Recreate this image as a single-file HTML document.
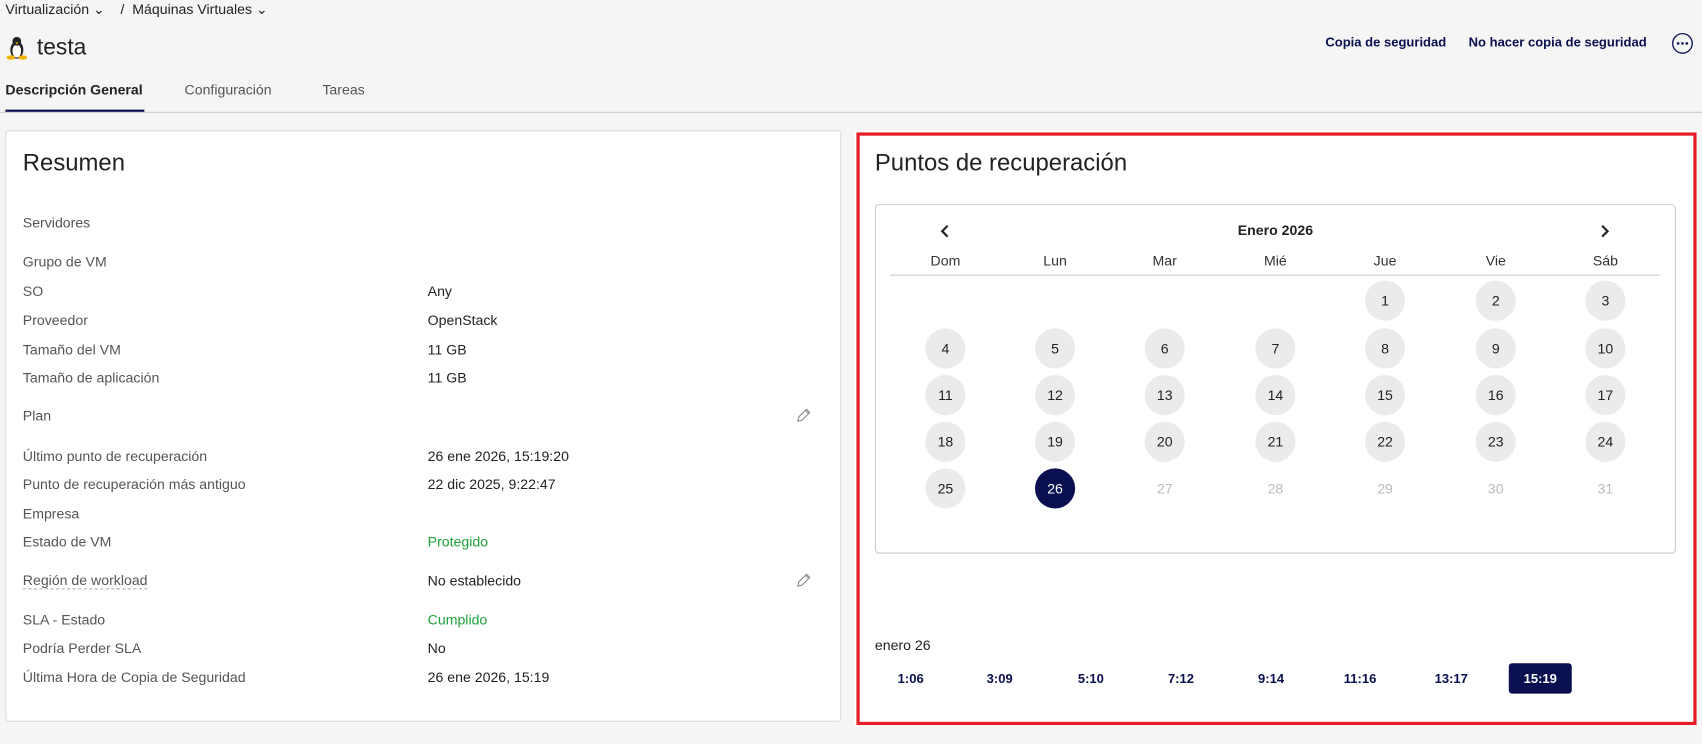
<!DOCTYPE html>
<html><head><meta charset="utf-8"><style>
html,body{margin:0;padding:0;width:1702px;height:743px;overflow:hidden;background:#f5f5f5;}
#w{position:absolute;left:0;top:0;width:1568px;height:685px;transform:scale(1.08546);transform-origin:0 0;font-family:"Liberation Sans",sans-serif;color:#222;}
.a{position:absolute;white-space:nowrap;}
.lbl{position:absolute;left:21px;font-size:13px;color:#555;transform:translateY(-50%);}
.val{position:absolute;left:394px;font-size:13px;color:#222;transform:translateY(-50%);}
.dn{position:absolute;font-size:13px;color:#333;transform:translate(-50%,-50%);}
.d{position:absolute;width:37px;height:37px;border-radius:50%;background:#ebebeb;font-size:13px;color:#222;display:flex;align-items:center;justify-content:center;transform:translate(-50%,-50%);}
.d.o{background:none;color:#bbb;}
.d.s{background:#0a0f50;color:#fff;}
.t{position:absolute;top:611px;width:58px;height:28px;font-size:12px;font-weight:bold;color:#0a0f50;display:flex;align-items:center;justify-content:center;transform:translateX(-50%);border-radius:3px;}
</style></head><body><div id="w">
<div class="a" style="left:5px;top:1px;font-size:13px;color:#222">Virtualización &#8964;&nbsp;&nbsp;&nbsp;&nbsp;/&nbsp;&nbsp;Máquinas Virtuales &#8964;</div>
<svg class="a" style="left:6px;top:33px" width="19" height="22" viewBox="0 0 19 22"><ellipse cx="9.5" cy="13" rx="6" ry="8" fill="#222"/><ellipse cx="9.5" cy="14" rx="4" ry="6" fill="#fff"/><circle cx="9.5" cy="5" r="4" fill="#222"/><ellipse cx="4" cy="20" rx="4" ry="2" fill="#f0b400"/><ellipse cx="15" cy="20" rx="4" ry="2" fill="#f0b400"/><path d="M8 6h3l-1.5 2z" fill="#f0b400"/></svg>
<div class="a" style="left:34px;top:32px;font-size:21px;color:#222">testa</div>
<div class="a" style="left:1221px;top:32px;font-size:12px;font-weight:bold;color:#0a0f50">Copia de seguridad</div>
<div class="a" style="left:1353px;top:32px;font-size:12px;font-weight:bold;color:#0a0f50">No hacer copia de seguridad</div>
<svg class="a" style="left:1540px;top:30px" width="20" height="20"><circle cx="10" cy="10" r="9" fill="none" stroke="#0a0f50" stroke-width="1.2"/><circle cx="6" cy="10" r="1.2" fill="#0a0f50"/><circle cx="10" cy="10" r="1.2" fill="#0a0f50"/><circle cx="14" cy="10" r="1.2" fill="#0a0f50"/></svg>
<div class="a" style="left:5px;top:75px;font-size:13px;font-weight:bold;color:#222">Descripción General</div>
<div class="a" style="left:170px;top:75px;font-size:13px;color:#555">Configuración</div>
<div class="a" style="left:297px;top:75px;font-size:13px;color:#555">Tareas</div>
<div class="a" style="left:0;top:103px;width:1568px;height:1px;background:#ccc"></div>
<div class="a" style="left:5px;top:101px;width:128px;height:2px;background:#0a0f50"></div>

<div class="a" style="left:5px;top:120px;width:768px;height:543px;background:#fff;border:1px solid #ddd;border-radius:3px"></div>
<div class="a" style="left:21px;top:137px;font-size:22px;color:#222">Resumen</div>
<div class="lbl" style="top:205px">Servidores</div>
<div class="lbl" style="top:241px">Grupo de VM</div>
<div class="lbl" style="top:268px">SO</div><div class="val" style="top:268px">Any</div>
<div class="lbl" style="top:295px">Proveedor</div><div class="val" style="top:295px">OpenStack</div>
<div class="lbl" style="top:322px">Tamaño del VM</div><div class="val" style="top:322px">11 GB</div>
<div class="lbl" style="top:348px">Tamaño de aplicación</div><div class="val" style="top:348px">11 GB</div>
<div class="lbl" style="top:383px">Plan</div>
<div class="lbl" style="top:420px">Último punto de recuperación</div><div class="val" style="top:420px">26 ene 2026, 15:19:20</div>
<div class="lbl" style="top:446px">Punto de recuperación más antiguo</div><div class="val" style="top:446px">22 dic 2025, 9:22:47</div>
<div class="lbl" style="top:473px">Empresa</div>
<div class="lbl" style="top:499px">Estado de VM</div><div class="val" style="top:499px;color:#1ea13a">Protegido</div>
<div class="lbl" style="top:535px;border-bottom:1px dashed #aaa">Región de workload</div><div class="val" style="top:535px">No establecido</div>
<div class="lbl" style="top:571px">SLA - Estado</div><div class="val" style="top:571px;color:#1ea13a">Cumplido</div>
<div class="lbl" style="top:597px">Podría Perder SLA</div><div class="val" style="top:597px">No</div>
<div class="lbl" style="top:624px">Última Hora de Copia de Seguridad</div><div class="val" style="top:624px">26 ene 2026, 15:19</div>
<svg class="a" style="left:732px;top:375px" width="16" height="16"><path d="M3 13l1-4 7-7 3 3-7 7z M10 3l3 3" fill="none" stroke="#888" stroke-width="1"/></svg>
<svg class="a" style="left:732px;top:527px" width="16" height="16"><path d="M3 13l1-4 7-7 3 3-7 7z M10 3l3 3" fill="none" stroke="#888" stroke-width="1"/></svg>

<div class="a" style="left:787px;top:120px;width:776px;height:549px;background:#fff"></div>
<div class="a" style="left:789px;top:122px;width:768px;height:540px;border:3px solid #e41e26"></div>
<div class="a" style="left:806px;top:137px;font-size:22px;color:#222">Puntos de recuperación</div>
<div class="a" style="left:806px;top:188px;width:736px;height:320px;border:1px solid #ccc;border-radius:4px"></div>
<svg class="a" style="left:865px;top:206px" width="12" height="14"><path d="M8 2L3 7l5 5" fill="none" stroke="#222" stroke-width="2"/></svg>
<svg class="a" style="left:1472px;top:206px" width="12" height="14"><path d="M4 2l5 5-5 5" fill="none" stroke="#222" stroke-width="2"/></svg>
<div class="dn" style="left:1175px;top:212px;font-weight:bold;color:#222">Enero 2026</div>
<div class="dn" style="left:871px;top:240px">Dom</div><div class="dn" style="left:972px;top:240px">Lun</div><div class="dn" style="left:1073px;top:240px">Mar</div><div class="dn" style="left:1175px;top:240px">Mié</div><div class="dn" style="left:1276px;top:240px">Jue</div><div class="dn" style="left:1378px;top:240px">Vie</div><div class="dn" style="left:1479px;top:240px">Sáb</div>
<div class="a" style="left:820px;top:253px;width:709px;height:1px;background:#ccc"></div>
<div class="d" style="left:1276px;top:277px">1</div><div class="d" style="left:1378px;top:277px">2</div><div class="d" style="left:1479px;top:277px">3</div>
<div class="d" style="left:871px;top:321px">4</div><div class="d" style="left:972px;top:321px">5</div><div class="d" style="left:1073px;top:321px">6</div><div class="d" style="left:1175px;top:321px">7</div><div class="d" style="left:1276px;top:321px">8</div><div class="d" style="left:1378px;top:321px">9</div><div class="d" style="left:1479px;top:321px">10</div>
<div class="d" style="left:871px;top:364px">11</div><div class="d" style="left:972px;top:364px">12</div><div class="d" style="left:1073px;top:364px">13</div><div class="d" style="left:1175px;top:364px">14</div><div class="d" style="left:1276px;top:364px">15</div><div class="d" style="left:1378px;top:364px">16</div><div class="d" style="left:1479px;top:364px">17</div>
<div class="d" style="left:871px;top:407px">18</div><div class="d" style="left:972px;top:407px">19</div><div class="d" style="left:1073px;top:407px">20</div><div class="d" style="left:1175px;top:407px">21</div><div class="d" style="left:1276px;top:407px">22</div><div class="d" style="left:1378px;top:407px">23</div><div class="d" style="left:1479px;top:407px">24</div>
<div class="d" style="left:871px;top:450px">25</div><div class="d s" style="left:972px;top:450px">26</div><div class="d o" style="left:1073px;top:450px">27</div><div class="d o" style="left:1175px;top:450px">28</div><div class="d o" style="left:1276px;top:450px">29</div><div class="d o" style="left:1378px;top:450px">30</div><div class="d o" style="left:1479px;top:450px">31</div>
<div class="a" style="left:806px;top:587px;font-size:13px;color:#222">enero 26</div>
<div class="t" style="left:839px">1:06</div><div class="t" style="left:921px">3:09</div><div class="t" style="left:1005px">5:10</div><div class="t" style="left:1088px">7:12</div><div class="t" style="left:1171px">9:14</div><div class="t" style="left:1253px">11:16</div><div class="t" style="left:1337px">13:17</div><div class="t" style="left:1419px;background:#0a0f50;color:#fff">15:19</div>
</div></body></html>
